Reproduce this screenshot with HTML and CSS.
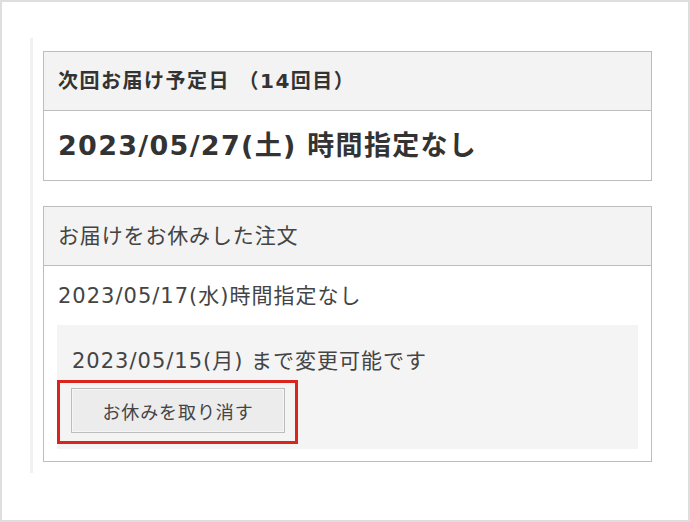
FILE: index.html
```html
<!DOCTYPE html>
<html lang="ja">
<head>
    <meta charset="UTF-8">
    <title>定期便 お届け予定</title>
    <link rel="stylesheet" href="styles.css">
</head>
<body>
    <div class="frame">
        <div class="content">
            <div class="card">
                <div class="card-head bold">次回お届け予定日 （14回目）</div>
                <div class="card-body next">
                    <div class="next-date">2023/05/27(土) 時間指定なし</div>
                </div>
            </div>

            <div class="card">
                <div class="card-head">お届けをお休みした注文</div>
                <div class="card-body">
                    <div class="skip-date">2023/05/17(水)時間指定なし</div>
                    <div class="change-box">
                        <div class="deadline">2023/05/15(月) まで変更可能です</div>
                        <div class="highlight">
                            <button class="btn">お休みを取り消す</button>
                        </div>
                    </div>
                </div>
            </div>
        </div>
    </div>
</body>
</html>
```

FILE: styles.css
```css
* {
    box-sizing: border-box;
}
body {
    margin: 0;
    font-family: "DejaVu Sans", "Noto Sans CJK JP", sans-serif;
    color: #444;
    background-color: #fff;
}
.frame {
    width: 690px;
    height: 522px;
    border: 2px solid #dedede;
    padding: 36px 36px 0 28px;
}
.content {
    border-left: 3px solid #f1f1f1;
    padding: 13px 0 11px 10px;
}
.card {
    border: 1px solid #bdbdbd;
    margin-bottom: 25px;
}
.card:last-child {
    margin-bottom: 0;
}
.card-head {
    height: 59px;
    background-color: #f3f3f3;
    border-bottom: 1px solid #bdbdbd;
    padding-left: 14px;
    font-size: 21px;
    letter-spacing: 0.85px;
    line-height: 58px;
    color: #444;
}
.card-head.bold {
    font-size: 20px;
    font-weight: bold;
    letter-spacing: 1.5px;
    color: #333;
}
.card-body {
    padding: 15px 13px 12px 13px;
}
.card-body.next {
    padding: 20px 14px 19px;
}
.next-date {
    font-size: 27px;
    font-weight: bold;
    letter-spacing: 1.3px;
    line-height: 30px;
    color: #333;
}
.skip-date {
    font-size: 21px;
    letter-spacing: 1px;
    line-height: 30px;
    padding-left: 1px;
    margin-bottom: 14px;
}
.change-box {
    background-color: #f4f4f4;
    padding: 21px 0 5px;
}
.deadline {
    font-size: 21px;
    letter-spacing: 1px;
    line-height: 30px;
    padding-left: 15px;
    margin-bottom: 4px;
}
.highlight {
    display: inline-block;
    border: 3px solid #d9251d;
    padding: 5px 10px 8px 11px;
}
.btn {
    display: block;
    width: 214px;
    height: 45px;
    background-color: #ececec;
    border: 1px solid #bcbcbc;
    box-shadow: inset 0 0 0 1px #f6f6f6;
    font-family: inherit;
    font-size: 18px;
    letter-spacing: 0.9px;
    color: #444;
    padding: 0;
}
```
